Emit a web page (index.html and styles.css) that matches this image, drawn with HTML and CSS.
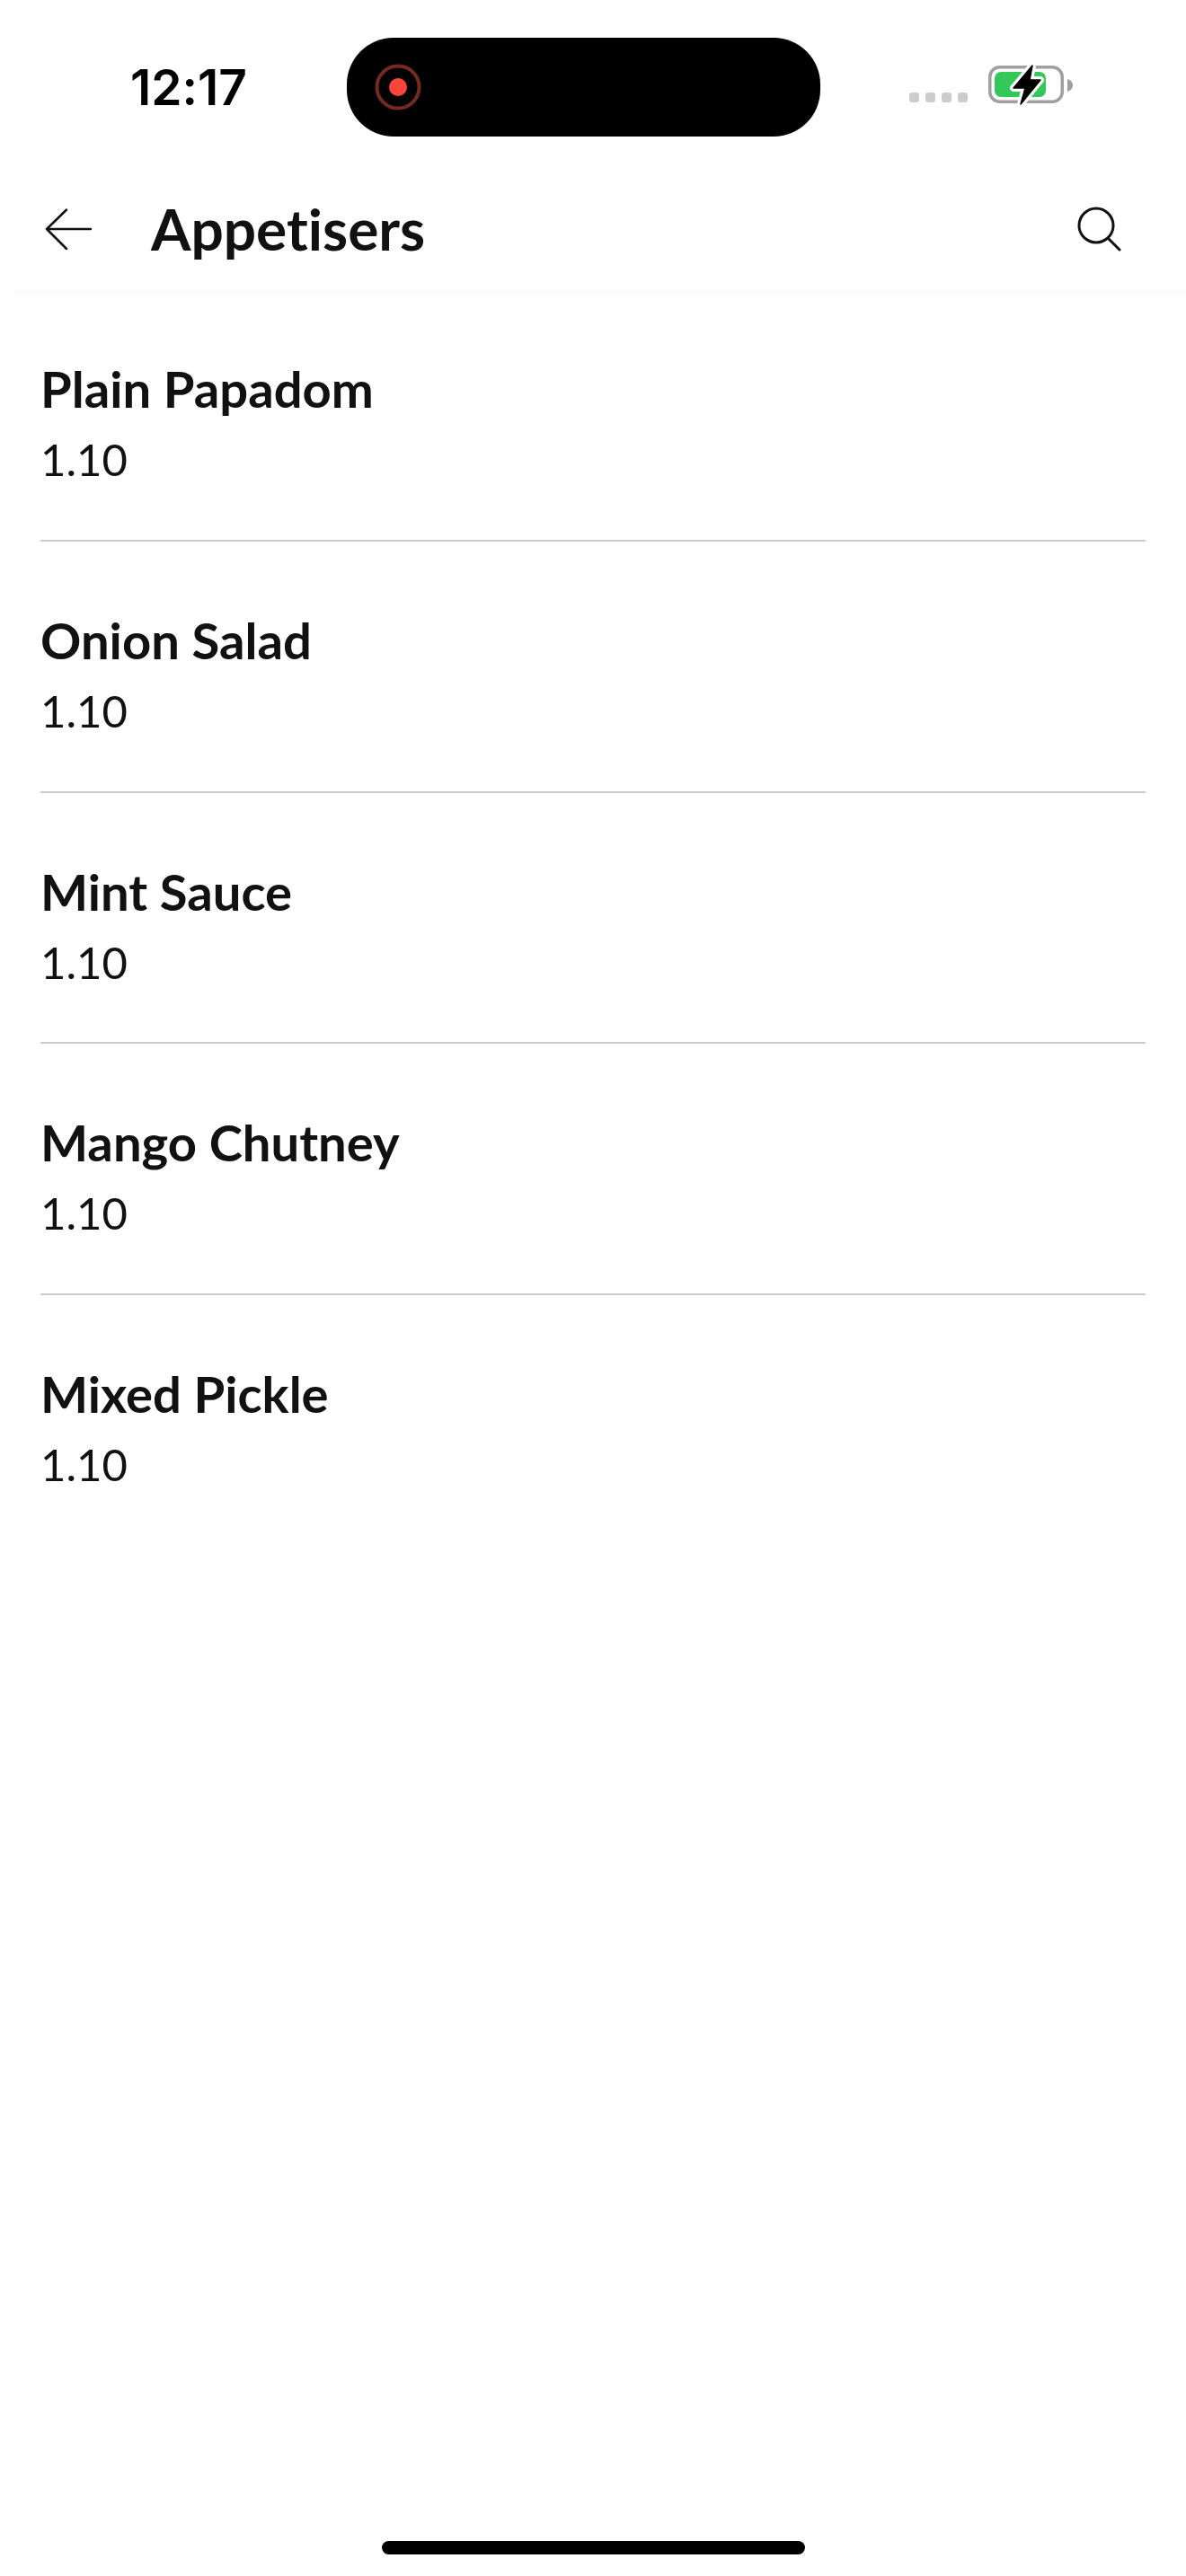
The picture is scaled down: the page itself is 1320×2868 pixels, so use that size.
FILE: index.html
```html
<!DOCTYPE html>
<html lang="en">
<head>
<meta charset="utf-8">
<title>Appetisers</title>
<link rel="stylesheet" href="styles.css">
</head>
<body>
<div class="phone">
  <div class="status">
    <div class="time">12:17</div>
    <div class="island">
      <svg class="rec" width="52" height="52" viewBox="0 0 52 52"><circle cx="26" cy="26" r="23.500" fill="none" stroke="#742a20" stroke-width="4"/><circle cx="26" cy="26" r="10" fill="#ff453a"/></svg>
    </div>
    <div class="signal"><span></span><span></span><span></span><span></span></div>
    <svg class="battery" width="98" height="48" viewBox="0 0 98 48">
      <rect x="4.750" y="4.750" width="80.500" height="38.500" rx="11" fill="none" stroke="#a0a0a0" stroke-width="3.500"/>
      <rect x="10" y="10" width="57" height="28" rx="7" fill="#34c759"/>
      <path d="M91 18c3.500 1 6 3.500 6 7s-2.500 6-6 7z" fill="#a0a0a0"/>
      <path d="M52 3 L31 28 L44 28 L39 46 L61 19 L49 19 Z" fill="#fff" stroke="#fff" stroke-width="8" stroke-linejoin="round"/>
      <path d="M52 3 L31 28 L44 28 L39 46 L61 19 L49 19 Z" fill="#000" stroke="#000" stroke-width="1.500" stroke-linejoin="round"/>
    </svg>
  </div>
  <header class="bar">
    <svg class="back" width="52" height="46" viewBox="0 0 52 46"><path d="M24 1.500 L2 23 L24 45 M2 23 H51" fill="none" stroke="#111" stroke-width="2.500" stroke-linecap="round" stroke-linejoin="round"/></svg>
    <h1 class="title">Appetisers</h1>
    <svg class="search" width="50" height="50" viewBox="0 0 50 50"><circle cx="21" cy="21" r="19" fill="none" stroke="#111" stroke-width="3"/><path d="M34 35 L47 48" fill="none" stroke="#111" stroke-width="3" stroke-linecap="round"/></svg>
  </header>
  <div class="bar-shade"></div>
  <main class="list">
    <div class="item"><div class="name">Plain Papadom</div><div class="price">1.10</div></div>
    <div class="item"><div class="name">Onion Salad</div><div class="price">1.10</div></div>
    <div class="item"><div class="name">Mint Sauce</div><div class="price">1.10</div></div>
    <div class="item"><div class="name">Mango Chutney</div><div class="price">1.10</div></div>
    <div class="item"><div class="name">Mixed Pickle</div><div class="price">1.10</div></div>
  </main>
  <div class="home"></div>
</div>
</body>
</html>
```
FILE: styles.css
```css
* { box-sizing: border-box; }
html, body { margin: 0; padding: 0; background: #fff; }
.phone {
  width: 1320px;
  height: 2868px;
  display: flex;
  flex-direction: column;
  font-family: "Lato", sans-serif;
  font-variant-ligatures: none;
  color: #111;
}
.status {
  height: 152px;
  padding: 42px 0 0 145px;
  display: flex;
  align-items: center;
  flex: none;
}
.time {
  width: 241px;
  font-family: "Inter", sans-serif;
  font-size: 55px;
  font-weight: 600;
  color: #000;
  line-height: 60px;
}
.island {
  width: 527px;
  height: 110px;
  background: #000;
  border-radius: 52px;
  padding-left: 31px;
  display: flex;
  align-items: center;
  flex: none;
}
.signal {
  margin-left: 99px;
  margin-top: 22px;
  display: flex;
  gap: 7px;
}
.signal span {
  width: 11px;
  height: 11px;
  border-radius: 3px;
  background: #ccc;
}
.battery { margin-left: 20px; margin-top: -6px; }
.bar {
  height: 171px;
  flex: none;
  padding: 80px 71px 0 50px;
  display: flex;
  align-items: flex-start;
}
.title {
  margin: -14px 0 0 66px;
  flex: 1;
  font-size: 64px;
  line-height: 74px;
  font-weight: 700;
  color: #111;
}
.search { margin-top: -2px; }
.bar-shade {
  height: 12px;
  margin-left: 15px;
  background: linear-gradient(#fafafa, #fff);
  flex: none;
}
.list { padding: 0 45px; flex: 1; margin-top: -2px; }
.item {
  height: 279.500px;
  padding-top: 75px;
  border-bottom: 2px solid #ccc;
}
.item:first-child { height: 270px; padding-top: 65px; }
.item:last-child { border-bottom: 0; }
.name { font-size: 56.200px; line-height: 70px; font-weight: 700; color: #111; }
.price { font-size: 49px; line-height: 60px; margin-top: 13px; color: #111; }
.home {
  width: 471px;
  height: 15px;
  margin: 0 auto 24px;
  background: #000;
  border-radius: 8px;
  flex: none;
}
```
